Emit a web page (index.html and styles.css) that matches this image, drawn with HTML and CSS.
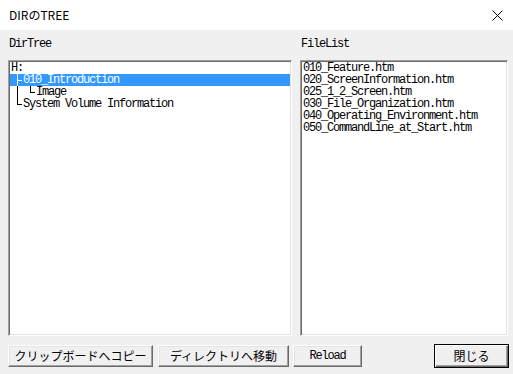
FILE: index.html
```html
<!DOCTYPE html>
<html>
<head>
  <title>DIRのTREE</title>
  <meta charset="utf-8">
  <link rel="stylesheet" href="styles.css">
</head>
<body>
  <div class="titlebar">
    <span class="title">DIRのTREE</span>
    <svg class="close" width="11" height="11" viewBox="0 0 11 11">
      <path d="M0.5 0.5 L10.5 10.5 M10.5 0.5 L0.5 10.5" stroke="#000" stroke-width="1" fill="none"/>
    </svg>
  </div>

  <div class="panes">
    <div class="label">DirTree</div>
    <div class="label">FileList</div>

    <!-- directory tree -->
    <div class="listbox">
      <div class="row">H:</div>
      <div class="row sel"><span class="tee"></span>010_Introduction</div>
      <div class="row"><span class="pipe"></span><span class="elbow"></span>Image</div>
      <div class="row"><span class="elbow"></span>System Volume Information</div>
    </div>

    <!-- files -->
    <div class="listbox">
      <div class="row">010_Feature.htm</div>
      <div class="row">020_ScreenInformation.htm</div>
      <div class="row">025_1_2_Screen.htm</div>
      <div class="row">030_File_Organization.htm</div>
      <div class="row">040_Operating_Environment.htm</div>
      <div class="row">050_CommandLine_at_Start.htm</div>
    </div>
  </div>

  <div class="buttons">
    <button class="btn copy">クリップボードへコピー</button>
    <button class="btn move">ディレクトリへ移動</button>
    <button class="btn reload">Reload</button>
    <button class="btn default">閉じる</button>
  </div>
</body>
</html>
```

FILE: styles.css
```css
body {
  margin: 0;
  width: 513px;
  height: 374px;
  overflow: hidden;
  background-color: #f0f0f0;
  font-family: "Liberation Mono", "Noto Sans CJK JP", monospace;
  font-size: 12px;
  letter-spacing: -1.2px;
  color: #000;
}
.titlebar {
  height: 30px;
  background-color: #fff;
  display: flex;
  align-items: center;
  justify-content: space-between;
  padding: 0 10px 0 9px;
  letter-spacing: 0;
}
.title {
  font-family: "Noto Sans CJK JP", sans-serif;
  font-size: 12px;
  margin-top: -1px;
}
.close {
  display: block;
}
.panes {
  display: grid;
  grid-template-columns: 284px 208px;
  grid-template-rows: 12px 276px;
  column-gap: 8px;
  row-gap: 10px;
  padding: 8px 0 0 8px;
}
.label {
  line-height: 12px;
  padding-left: 1px;
}
.listbox {
  background-color: #fff;
  border: 1px solid;
  border-color: #a0a0a0 #fff #fff #a0a0a0;
  box-shadow: inset 1px 1px #696969, inset -1px -1px #e3e3e3;
  padding: 1px;
  overflow: hidden;
}
.row {
  height: 12px;
  line-height: 12px;
  white-space: pre;
  padding-left: 1px;
}
.sel {
  background-color: #3399ff;
  color: #fff;
}
.tee, .pipe, .elbow {
  display: inline-block;
  width: 12px;
  height: 12px;
  vertical-align: top;
  margin-left: -1px;
  margin-right: 1px;
}
.tee {
  background:
    linear-gradient(currentColor, currentColor) 7px 0 / 1px 12px no-repeat,
    linear-gradient(currentColor, currentColor) 7px 6px / 5px 1px no-repeat;
}
.pipe {
  background: linear-gradient(currentColor, currentColor) 7px 0 / 1px 12px no-repeat;
}
.elbow {
  background:
    linear-gradient(currentColor, currentColor) 7px 0 / 1px 7px no-repeat,
    linear-gradient(currentColor, currentColor) 7px 6px / 5px 1px no-repeat;
}
.pipe + .elbow {
  margin-left: 0;
}
.buttons {
  display: flex;
  align-items: center;
  margin-top: 8px;
  padding: 0 4px 0 8px;
  height: 24px;
}
.btn {
  height: 22px;
  margin: 0;
  padding: 0;
  background-color: #f0f0f0;
  border: 1px solid;
  border-color: #fff #696969 #696969 #fff;
  box-shadow: inset -1px -1px #a0a0a0, inset 1px 1px #e3e3e3;
  font-family: "Noto Sans CJK JP", sans-serif;
  font-size: 12px;
  letter-spacing: 0;
  line-height: 18px;
  color: #000;
}
.copy {
  width: 145px;
  margin-right: 5px;
}
.move {
  width: 131px;
  margin-right: 4px;
}
.reload {
  width: 69px;
  font-family: "Liberation Mono", monospace;
  letter-spacing: -1.2px;
}
.default {
  width: 75px;
  height: 24px;
  margin-left: auto;
  border-color: #000;
  box-shadow: inset 1px 1px #fff, inset -1px -1px #696969, inset -2px -2px #a0a0a0;
}
```
